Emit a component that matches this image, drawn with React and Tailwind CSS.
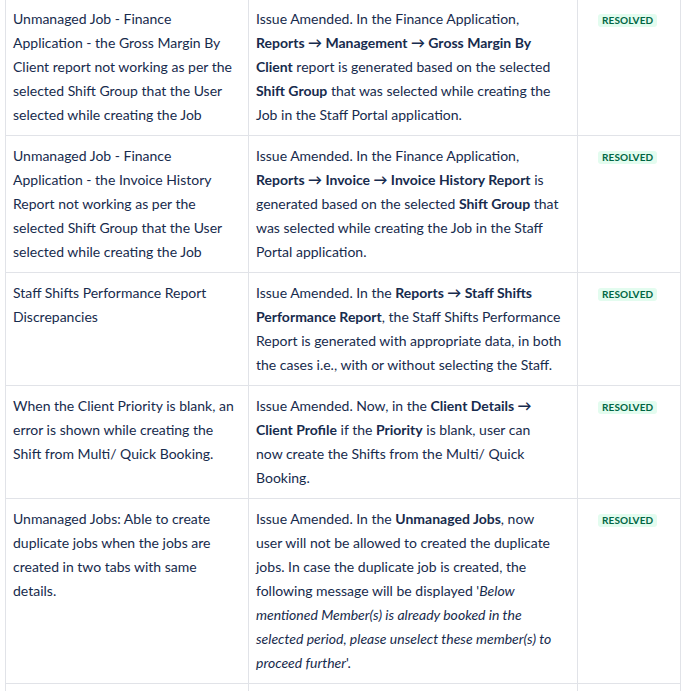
import React from 'react';

const Lozenge = () => (
  <span className="rounded-[3px] bg-[#e3fcef] px-[4px] text-[10px] font-bold uppercase leading-[13px] tracking-[0.1px] text-[#006644]">
    Resolved
  </span>
);

const rows = [
  {
    issue: 'Unmanaged Job - Finance Application - the Gross Margin By Client report not working as per the selected Shift Group that the User selected while creating the Job',
    fix: (
      <>
        Issue Amended. In the Finance Application,
        <br />
        <b>Reports → Management → Gross Margin By</b>
        <br />
        <b>Client</b> report is generated based on the selected
        <br />
        <b>Shift Group</b> that was selected while creating the
        <br />
        Job in the Staff Portal application.
      </>
    ),
  },
  {
    issue: 'Unmanaged Job - Finance Application - the Invoice History Report not working as per the selected Shift Group that the User selected while creating the Job',
    fix: (
      <>
        Issue Amended. In the Finance Application,
        <br />
        <b>Reports → Invoice → Invoice History Report</b> is
        <br />
        generated based on the selected <b>Shift Group</b> that
        <br />
        was selected while creating the Job in the Staff
        <br />
        Portal application.
      </>
    ),
  },
  {
    issue: 'Staff Shifts Performance Report Discrepancies',
    fix: (
      <>
        Issue Amended. In the <b>Reports → Staff Shifts</b>
        <br />
        <b>Performance Report</b>, the Staff Shifts Performance
        <br />
        Report is generated with appropriate data, in both
        <br />
        the cases i.e., with or without selecting the Staff.
      </>
    ),
  },
  {
    issue: 'When the Client Priority is blank, an error is shown while creating the Shift from Multi/ Quick Booking.',
    fix: (
      <>
        Issue Amended. Now, in the <b>Client Details →</b>
        <br />
        <b>Client Profile</b> if the <b>Priority</b> is blank, user can
        <br />
        now create the Shifts from the Multi/ Quick
        <br />
        Booking.
      </>
    ),
  },
  {
    issue: 'Unmanaged Jobs: Able to create duplicate jobs when the jobs are created in two tabs with same details.',
    fix: (
      <>
        Issue Amended. In the <b>Unmanaged Jobs</b>, now
        <br />
        user will not be allowed to created the duplicate
        <br />
        jobs. In case the duplicate job is created, the
        <br />
        following message will be displayed '<i>Below</i>
        <br />
        <i>mentioned Member(s) is already booked in the</i>
        <br />
        <i>selected period, please unselect these member(s) to</i>
        <br />
        <i>proceed further</i>'.
      </>
    ),
  },
];

const App = () => {
  return (
    <div className="h-[691px] overflow-hidden bg-white font-['Lato',sans-serif] text-[14px] leading-[24px] text-[#172b4d]">
      <div className="ml-[5px] mt-[-2px] grid w-[676px] grid-cols-[243px_329px_103px] border-l border-t border-[#e1e3e8]">
        {rows.map((row, i) => (
          <React.Fragment key={i}>
            <div className="border-b border-r border-[#e1e3e8] px-[7px] py-[8px]">{row.issue}</div>
            <div className="border-b border-r border-[#e1e3e8] pl-[7px] pr-[4px] py-[8px]">{row.fix}</div>
            <div className="flex items-start border-b border-r border-[#e1e3e8] pl-[20px] pt-[15px]">
              <Lozenge />
            </div>
          </React.Fragment>
        ))}
        {/* next row, cut off by the window */}
        <div className="h-[40px] border-b border-r border-[#e1e3e8]" />
        <div className="h-[40px] border-b border-r border-[#e1e3e8]" />
        <div className="h-[40px] border-b border-r border-[#e1e3e8]" />
      </div>
    </div>
  );
};

export default App;
